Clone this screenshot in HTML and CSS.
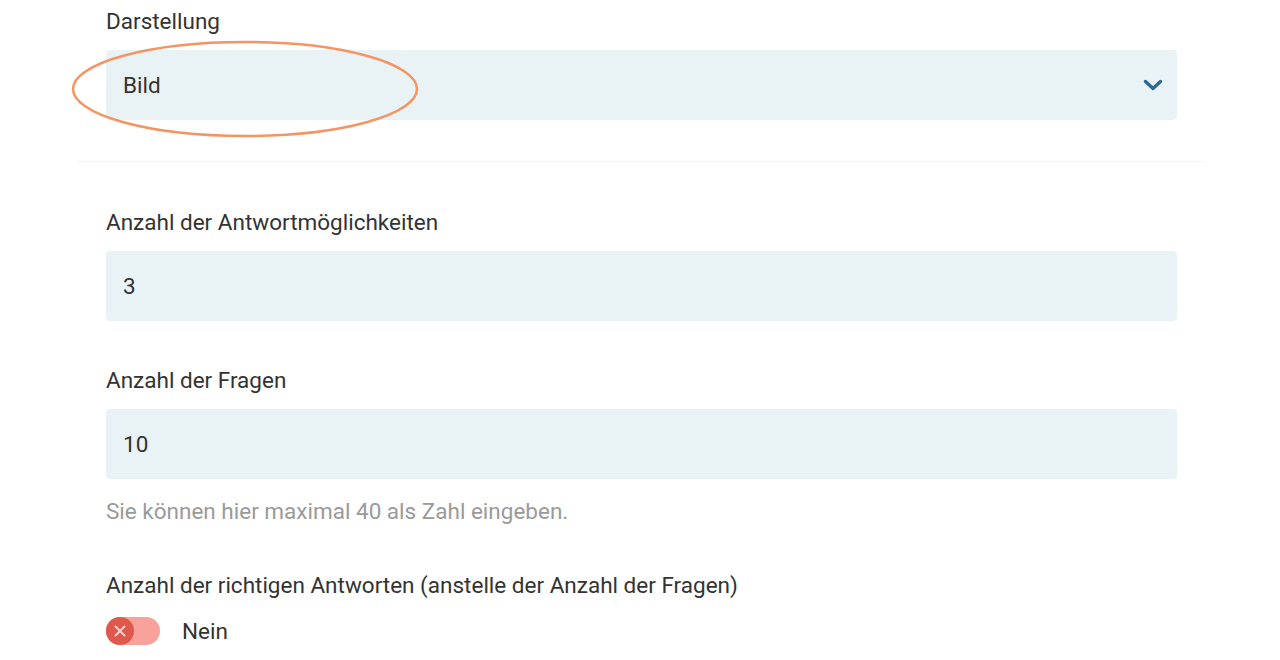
FILE: index.html
```html
<!DOCTYPE html>
<html lang="de">
<head>
<meta charset="utf-8">
<title>Einstellungen</title>
<link rel="stylesheet" href="styles.css">
</head>
<body>
<div class="panel">
  <section class="section">
    <div class="field">
      <label class="label">Darstellung</label>
      <div class="select-wrap">
        <div class="box select">
          <span class="value">Bild</span>
          <svg class="chevron" width="20" height="12" viewBox="0 0 20 12"><path d="M2.5 2.5 L10 9.5 L17.5 2.5" fill="none" stroke="#2b6a96" stroke-width="3.4" stroke-linecap="round" stroke-linejoin="round"/></svg>
        </div>
        <svg class="highlight" width="352" height="98" viewBox="0 0 352 98"><ellipse cx="176" cy="49" rx="172" ry="47" fill="none" stroke="#f59462" stroke-width="2.5"/></svg>
      </div>
    </div>
  </section>
  <hr class="divider">
  <section class="section">
    <div class="field">
      <label class="label">Anzahl der Antwortmöglichkeiten</label>
      <div class="box"><span class="value">3</span></div>
    </div>
    <div class="field">
      <label class="label">Anzahl der Fragen</label>
      <div class="box"><span class="value">10</span></div>
      <p class="help">Sie können hier maximal 40 als Zahl eingeben.</p>
    </div>
    <div class="field field-toggle">
      <label class="label">Anzahl der richtigen Antworten (anstelle der Anzahl der Fragen)</label>
      <div class="toggle-row">
        <span class="toggle"><span class="knob"><svg width="28" height="28" viewBox="0 0 28 28"><path d="M9.5 9.5 L18.5 18.5 M18.5 9.5 L9.5 18.5" stroke="#f6d2ce" stroke-width="2" stroke-linecap="round"/></svg></span></span>
        <span class="toggle-text">Nein</span>
      </div>
    </div>
  </section>
</div>
</body>
</html>
```
FILE: styles.css
```css
html, body {
  margin: 0;
  padding: 0;
  background: #ffffff;
}
body {
  font-family: Roboto, "Liberation Sans", Arial, sans-serif;
  color: #333333;
  overflow: hidden;
}
.panel {
  margin-left: 76px;
  width: 1129px;
  padding-top: 8px;
}
.section {
  padding: 0 28px 0 30px;
  display: flex;
  flex-direction: column;
  gap: 46px;
}
.field {
  display: flex;
  flex-direction: column;
}
.label {
  font-size: 22.5px;
  line-height: 26px;
  color: #333333;
  margin-bottom: 16px;
}
.select-wrap {
  position: relative;
}
.box {
  height: 70px;
  background: #e9f2f5;
  border-radius: 4px;
  display: flex;
  align-items: center;
  padding: 0 14px 0 17px;
}
.value {
  font-size: 22.5px;
  color: #333333;
  flex: 1;
}
.highlight {
  position: absolute;
  left: -37px;
  top: -10px;
}
.divider {
  border: 0;
  border-top: 1.5px solid #f2f2f2;
  margin: 41px 0 47px 1px;
}
.help {
  margin: 19px 0 0;
  font-size: 22.5px;
  line-height: 26px;
  color: #9a9a9a;
}
.field-toggle {
  margin-top: 2px;
}
.field-toggle .label {
  margin-bottom: 19px;
}
.toggle-row {
  display: flex;
  align-items: center;
  gap: 22px;
}
.toggle {
  width: 54px;
  height: 28px;
  border-radius: 14px;
  background: #f8a29b;
  display: flex;
  align-items: center;
}
.knob {
  width: 28px;
  height: 28px;
  border-radius: 50%;
  background: #e0574c;
  display: flex;
}
.toggle-text {
  font-size: 22.5px;
  color: #333333;
}
```
